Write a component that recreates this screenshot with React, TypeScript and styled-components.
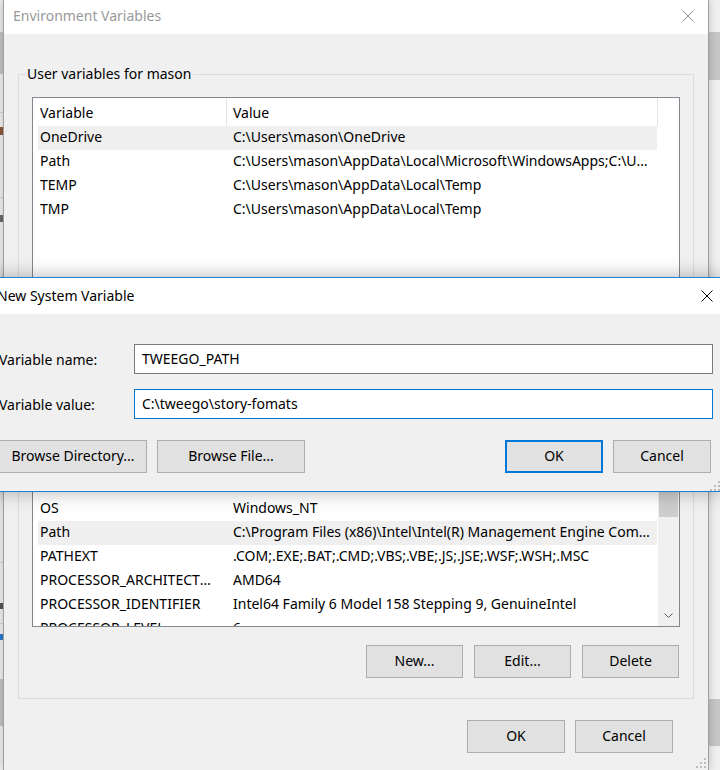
import React from 'react';
import styled, { createGlobalStyle } from 'styled-components';

const GlobalStyle = createGlobalStyle`
  html, body {
    margin: 0;
    padding: 0;
    overflow: hidden;
  }
  body {
    background: #f0f0f0;
    font-family: "Noto Sans", "Open Sans", sans-serif;
    font-size: 14px;
    color: #000;
  }
  * {
    box-sizing: border-box;
  }
`;

const Desktop = styled.div`
  position: relative;
  width: 720px;
  height: 770px;
  overflow: hidden;
  display: flex;
  background: #f0f0f0;
`;

/* strips of the windows lying behind */
const BackStrip = styled.div<{ $w: number }>`
  flex: none;
  width: ${(p) => p.$w}px;
  display: flex;
  flex-direction: column;
`;

const Segment = styled.div<{ $h: number; $bg: string }>`
  flex: none;
  height: ${(p) => p.$h}px;
  background: ${(p) => p.$bg};
`;

const EnvWindow = styled.div`
  position: relative;
  z-index: 1;
  flex: none;
  width: 706px;
  height: 770px;
  display: flex;
  flex-direction: column;
  background: #f0f0f0;
  border-left: 1px solid #a0a0a0;
  border-right: 1px solid #a0a0a0;
  box-shadow: 0 0 8px rgba(0, 0, 0, 0.22);
`;

const TitleBar = styled.div<{ $h: number; $pad: number; $active?: boolean }>`
  flex: none;
  height: ${(p) => p.$h}px;
  display: flex;
  align-items: center;
  justify-content: space-between;
  padding: 0 0 ${(p) => (p.$active ? 1 : 3)}px ${(p) => p.$pad}px;
  background: #fff;
  color: ${(p) => (p.$active ? '#000' : '#999')};
  font-size: 14px;
  white-space: nowrap;
`;

const CloseButton = styled.div<{ $w: number }>`
  flex: none;
  width: ${(p) => p.$w}px;
  height: 100%;
  display: flex;
  align-items: center;
  justify-content: center;
`;

const EnvBody = styled.div`
  flex: 1;
  display: flex;
  flex-direction: column;
  padding: 0 14px;
`;

const GroupBox = styled.fieldset<{ $top: number }>`
  margin: ${(p) => p.$top}px 0 0;
  padding: 0;
  min-width: 0;
  border: 1px solid #dcdcdc;
`;

const GroupLegend = styled.legend`
  margin-left: 6px;
  padding: 0 2px;
  line-height: 20px;
  font-size: 14px;
`;

const GroupContent = styled.div`
  display: flex;
  flex-direction: column;
  padding: 13px 13px 20px;
`;

const ListView = styled.div<{ $h: number }>`
  height: ${(p) => p.$h}px;
  display: flex;
  overflow: hidden;
  background: #fff;
  border: 1px solid #828790;
`;

const ListBody = styled.div`
  flex: 1;
  min-width: 0;
  display: flex;
  flex-direction: column;
`;

const HeaderRow = styled.div`
  flex: none;
  height: 28px;
  display: flex;
`;

const HeaderCell = styled.div<{ $w: number; $pad: number }>`
  flex: none;
  width: ${(p) => p.$w}px;
  padding-left: ${(p) => p.$pad}px;
  display: flex;
  align-items: center;
  border-right: 1px solid #e5e5e5;
`;

const Row = styled.div<{ $selected?: boolean }>`
  flex: none;
  height: 24px;
  width: 619px;
  margin-left: 5px;
  display: grid;
  grid-template-columns: 189px 430px;
  background: ${(p) => (p.$selected ? '#efefef' : 'transparent')};
`;

const Cell = styled.div<{ $pad: number }>`
  padding: 0 6px 2px ${(p) => p.$pad}px;
  line-height: 22px;
  white-space: nowrap;
  overflow: hidden;
  text-overflow: ellipsis;
`;

const ScrollBar = styled.div`
  flex: none;
  width: 21px;
  display: flex;
  flex-direction: column;
  background: #f0f0f0;
`;

const ScrollArrow = styled.div<{ $h: number }>`
  flex: none;
  height: ${(p) => p.$h}px;
  display: flex;
  align-items: center;
  justify-content: center;
`;

const ScrollThumb = styled.div<{ $h: number }>`
  flex: none;
  height: ${(p) => p.$h}px;
  margin: 0 1px;
  background: #cdcdcd;
`;

const ScrollTrack = styled.div`
  flex: 1;
`;

const ButtonRow = styled.div<{ $top: number; $right?: number; $justify?: string }>`
  display: flex;
  justify-content: ${(p) => p.$justify || 'flex-end'};
  gap: 11px;
  margin-top: ${(p) => p.$top}px;
  padding-right: ${(p) => p.$right || 0}px;
`;

const ButtonGroup = styled.div`
  display: flex;
  gap: 10px;
`;

const Button = styled.button<{ $w: number; $default?: boolean }>`
  flex: none;
  width: ${(p) => p.$w}px;
  height: 33px;
  padding: 0 0 2px;
  background: #e1e1e1;
  border: ${(p) => (p.$default ? '2px solid #0078d7' : '1px solid #adadad')};
  font-family: inherit;
  font-size: 14px;
  color: #000;
`;

const Grip = styled.div<{ $right: number; $bottom: number }>`
  position: absolute;
  right: ${(p) => p.$right}px;
  bottom: ${(p) => p.$bottom}px;
  line-height: 0;
`;

const Dialog = styled.div`
  position: absolute;
  z-index: 2;
  left: -12px;
  top: 277px;
  width: 734px;
  background: #f0f0f0;
  border: 1px solid #1883d7;
  box-shadow: 0 0 18px rgba(0, 0, 0, 0.3);
`;

const DialogBody = styled.div`
  display: flex;
  flex-direction: column;
  gap: 15px;
  padding: 30px 8px 18px 10px;
`;

const FieldRow = styled.div`
  display: grid;
  grid-template-columns: 135px 579px;
  align-items: center;
`;

const FieldLabel = styled.label`
  white-space: nowrap;
`;

const TextInput = styled.div<{ $focused?: boolean }>`
  height: 30px;
  display: flex;
  align-items: center;
  padding: 0 7px 1px;
  background: #fff;
  border: 1px solid ${(p) => (p.$focused ? '#0078d7' : '#7a7a7a')};
  white-space: nowrap;
`;

const CloseIcon = ({ color }: { color: string }) => (
  <svg width="12" height="12" viewBox="0 0 12 12">
    <path d="M0.5 0.5 L11.5 11.5 M11.5 0.5 L0.5 11.5" stroke={color} strokeWidth="1" fill="none" />
  </svg>
);

const GripIcon = () => (
  <svg width="10" height="10" viewBox="0 0 10 10" fill="#bcbcbc">
    <rect x="8" y="0" width="2" height="2" />
    <rect x="8" y="4" width="2" height="2" />
    <rect x="4" y="4" width="2" height="2" />
    <rect x="8" y="8" width="2" height="2" />
    <rect x="4" y="8" width="2" height="2" />
    <rect x="0" y="8" width="2" height="2" />
  </svg>
);

const userVars = [
  ['OneDrive', 'C:\\Users\\mason\\OneDrive'],
  ['Path', 'C:\\Users\\mason\\AppData\\Local\\Microsoft\\WindowsApps;C:\\Users\\mason\\AppData\\Roaming\\npm'],
  ['TEMP', 'C:\\Users\\mason\\AppData\\Local\\Temp'],
  ['TMP', 'C:\\Users\\mason\\AppData\\Local\\Temp'],
];

const systemVars = [
  ['ComSpec', 'C:\\Windows\\system32\\cmd.exe'],
  ['DriverData', 'C:\\Windows\\System32\\Drivers\\DriverData'],
  ['NUMBER_OF_PROCESSORS', '8'],
  ['OS', 'Windows_NT'],
  ['Path', 'C:\\Program Files (x86)\\Intel\\Intel(R) Management Engine Components\\iCLS\\;C:\\Program Files'],
  ['PATHEXT', '.COM;.EXE;.BAT;.CMD;.VBS;.VBE;.JS;.JSE;.WSF;.WSH;.MSC'],
  ['PROCESSOR_ARCHITECTURE', 'AMD64'],
  ['PROCESSOR_IDENTIFIER', 'Intel64 Family 6 Model 158 Stepping 9, GenuineIntel'],
  ['PROCESSOR_LEVEL', '6'],
];

const VarRows = ({ rows, selected }: { rows: string[][]; selected: string }) => (
  <>
    {rows.map(([name, value]) => (
      <Row key={name} $selected={name === selected}>
        <Cell $pad={2}>{name}</Cell>
        <Cell $pad={6}>{value}</Cell>
      </Row>
    ))}
  </>
);

const App: React.FC = () => {
  return (
    <Desktop>
      <GlobalStyle />

      {/* window behind, left edge */}
      <BackStrip $w={3}>
        <Segment $h={32} $bg="#ececec" />
        <Segment $h={42} $bg="#c4c4c4" />
        <Segment $h={38} $bg="#f0f0f0" />
        <Segment $h={1} $bg="#d4d4d4" />
        <Segment $h={14} $bg="#f0f0f0" />
        <Segment $h={8} $bg="#8a5a3a" />
        <Segment $h={62} $bg="#f0f0f0" />
        <Segment $h={1} $bg="#d4d4d4" />
        <Segment $h={17} $bg="#f0f0f0" />
        <Segment $h={7} $bg="#6a6a6a" />
        <Segment $h={340} $bg="#f0f0f0" />
        <Segment $h={1} $bg="#d4d4d4" />
        <Segment $h={40} $bg="#f0f0f0" />
        <Segment $h={6} $bg="#555" />
        <Segment $h={14} $bg="#f0f0f0" />
        <Segment $h={1} $bg="#d4d4d4" />
        <Segment $h={10} $bg="#f0f0f0" />
        <Segment $h={6} $bg="#2a7ad0" />
        <Segment $h={39} $bg="#f0f0f0" />
        <Segment $h={47} $bg="#c4c4c4" />
      </BackStrip>

      {/* Environment Variables */}
      <EnvWindow>
        <TitleBar $h={34} $pad={9}>
          Environment Variables
          <CloseButton $w={41}>
            <CloseIcon color="#8a8a8a" />
          </CloseButton>
        </TitleBar>

        <EnvBody>
          <GroupBox $top={30}>
            <GroupLegend>User variables for mason</GroupLegend>
            <GroupContent>
              <ListView $h={184}>
                <ListBody>
                  <HeaderRow>
                    <HeaderCell $w={194} $pad={7}>Variable</HeaderCell>
                    <HeaderCell $w={431} $pad={6}>Value</HeaderCell>
                  </HeaderRow>
                  <VarRows rows={userVars} selected="OneDrive" />
                </ListBody>
              </ListView>
              <ButtonRow $top={18} $right={1}>
                <Button $w={97}>New...</Button>
                <Button $w={97}>Edit...</Button>
                <Button $w={97}>Delete</Button>
              </ButtonRow>
            </GroupContent>
          </GroupBox>

          <GroupBox $top={10}>
            <GroupLegend>System variables</GroupLegend>
            <GroupContent>
              <ListView $h={231}>
                <ListBody>
                  <HeaderRow>
                    <HeaderCell $w={194} $pad={7}>Variable</HeaderCell>
                    <HeaderCell $w={431} $pad={6}>Value</HeaderCell>
                  </HeaderRow>
                  <VarRows rows={systemVars} selected="Path" />
                </ListBody>
                <ScrollBar>
                  <ScrollArrow $h={16} />
                  <ScrollThumb $h={104} />
                  <ScrollTrack />
                  <ScrollArrow $h={22}>
                    <svg width="9" height="5" viewBox="0 0 9 5">
                      <path d="M0.5 0.5 L4.5 4.5 L8.5 0.5" stroke="#606060" strokeWidth="1" fill="none" />
                    </svg>
                  </ScrollArrow>
                </ScrollBar>
              </ListView>
              <ButtonRow $top={18} $right={1}>
                <Button $w={97}>New...</Button>
                <Button $w={97}>Edit...</Button>
                <Button $w={97}>Delete</Button>
              </ButtonRow>
            </GroupContent>
          </GroupBox>

          <ButtonRow $top={21} $right={21}>
            <ButtonGroup>
              <Button $w={98}>OK</Button>
              <Button $w={98}>Cancel</Button>
            </ButtonGroup>
          </ButtonRow>
        </EnvBody>

        <Grip $right={2} $bottom={2}>
          <GripIcon />
        </Grip>
      </EnvWindow>

      {/* window behind, right edge */}
      <BackStrip $w={11}>
        <Segment $h={32} $bg="#f0f0f0" />
        <Segment $h={48} $bg="#c6c6c6" />
        <Segment $h={619} $bg="#f0f0f0" />
        <Segment $h={47} $bg="#c6c6c6" />
        <Segment $h={24} $bg="#f0f0f0" />
      </BackStrip>

      {/* New System Variable */}
      <Dialog>
        <TitleBar $h={36} $pad={8} $active>
          New System Variable
          <CloseButton $w={28}>
            <CloseIcon color="#000" />
          </CloseButton>
        </TitleBar>
        <DialogBody>
          <FieldRow>
            <FieldLabel>Variable name:</FieldLabel>
            <TextInput>TWEEGO_PATH</TextInput>
          </FieldRow>
          <FieldRow>
            <FieldLabel>Variable value:</FieldLabel>
            <TextInput $focused>C:\tweego\story-fomats</TextInput>
          </FieldRow>
          <ButtonRow $top={6} $right={2} $justify="space-between">
            <ButtonGroup>
              <Button $w={148}>Browse Directory...</Button>
              <Button $w={148}>Browse File...</Button>
            </ButtonGroup>
            <ButtonGroup>
              <Button $w={98} $default>OK</Button>
              <Button $w={98}>Cancel</Button>
            </ButtonGroup>
          </ButtonRow>
        </DialogBody>
        <Grip $right={1} $bottom={0}>
          <GripIcon />
        </Grip>
      </Dialog>
    </Desktop>
  );
};

export default App;
